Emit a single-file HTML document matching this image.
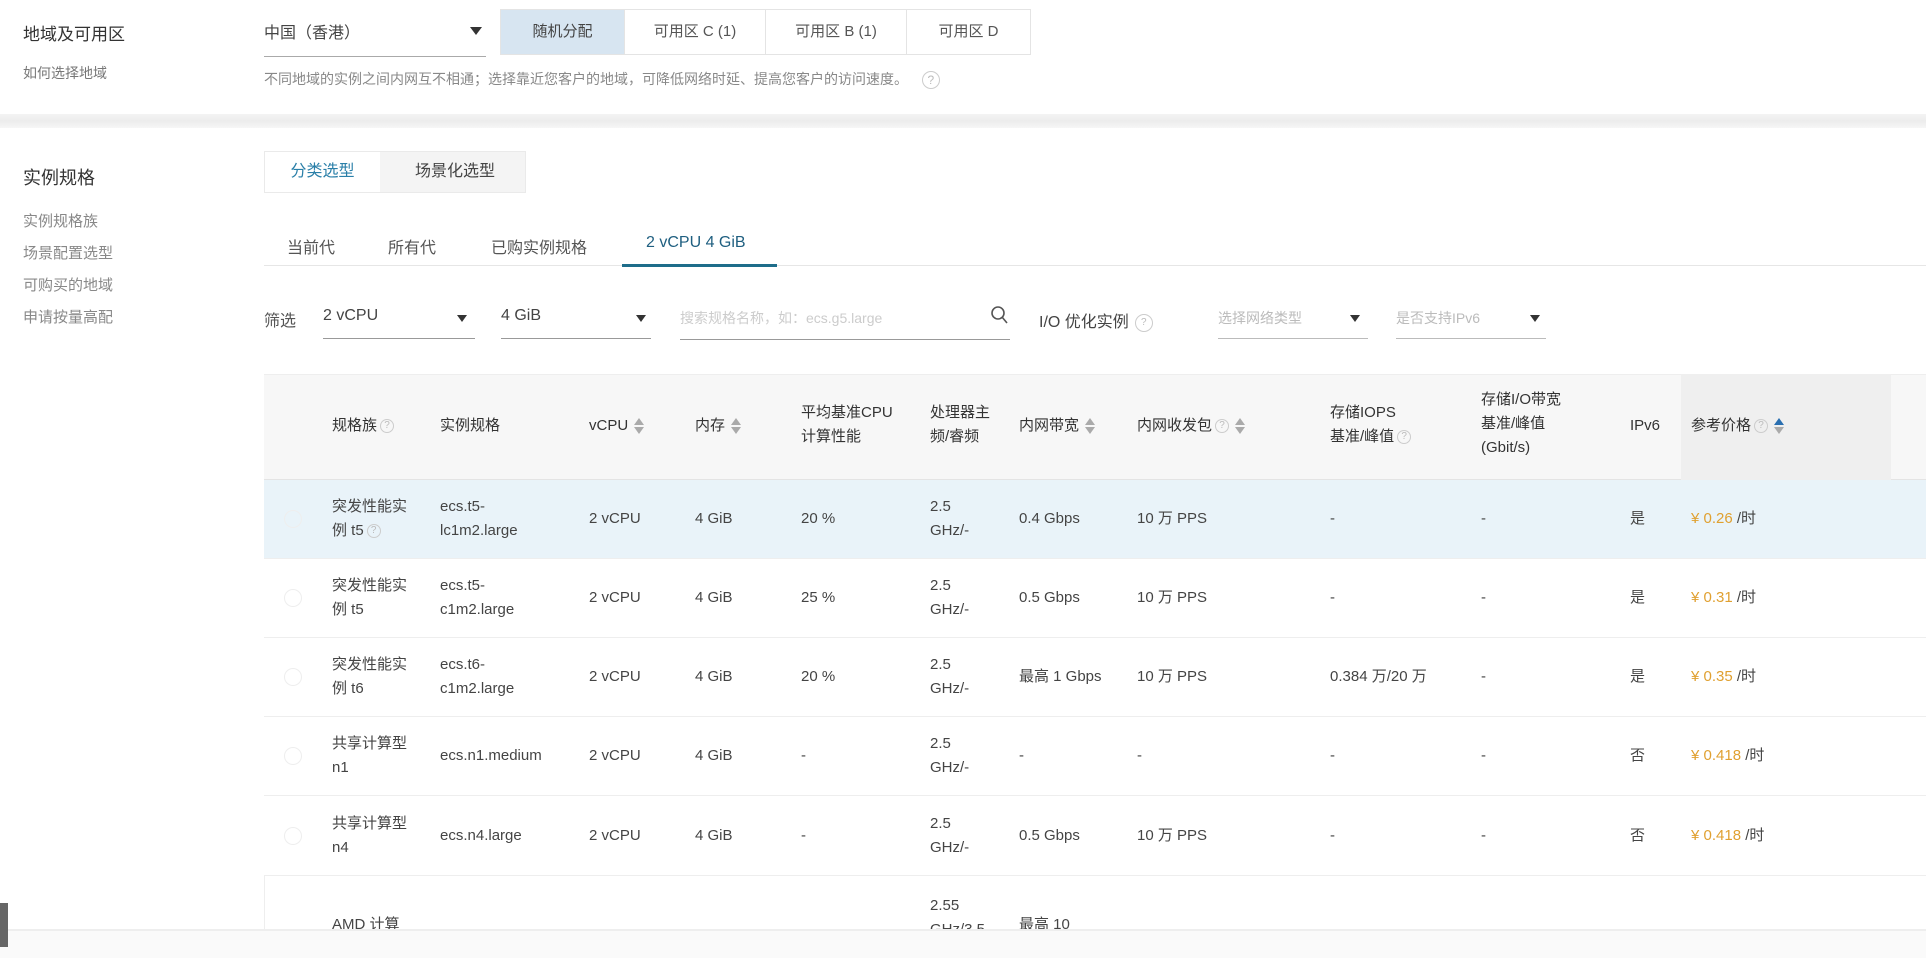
<!DOCTYPE html>
<html><head><meta charset="utf-8"><style>
*{margin:0;padding:0;box-sizing:border-box}
body{width:1926px;height:958px;overflow:hidden;background:#fff;font-family:"Liberation Sans","Noto Sans CJK SC",sans-serif;color:#444;position:relative}
.a{position:absolute;white-space:nowrap}
.g{color:#777}
.s{font-size:16px}
.tab{position:absolute;top:9px;height:46px;border:1px solid #e4e4e4;font-size:15px;line-height:44px;text-align:center;color:#555;background:#fff}
.ul{position:absolute;height:1px;background:#999}
.arr{position:absolute;width:0;height:0;border-left:6px solid transparent;border-right:6px solid transparent;border-top:8px solid #333}
.q{display:inline-block;width:14px;height:14px;border:1px solid #ccc;border-radius:50%;font-size:10px;line-height:12px;text-align:center;color:#bbb;vertical-align:middle;margin-left:3px}
.sort{display:inline-block;vertical-align:middle;margin-left:6px;width:10px;height:18px;position:relative}
.sort:before{content:"";position:absolute;top:1px;left:0;border-left:5px solid transparent;border-right:5px solid transparent;border-bottom:7px solid #aaa}
.sort:after{content:"";position:absolute;top:10px;left:0;border-left:5px solid transparent;border-right:5px solid transparent;border-top:7px solid #aaa}
.sort.up:before{border-bottom-color:#2a6fb0}
.row{position:absolute;left:264px;width:1662px;height:79px;border-bottom:1px solid #eee}
.c{position:absolute;font-size:15px;line-height:24px;color:#444;white-space:nowrap}
.rad{position:absolute;left:20px;top:30px;width:18px;height:18px;border:1px solid #eee;border-radius:50%}
.p{color:#e0a030}
</style></head><body>
<div class="a s" style="left:23px;top:20px;font-size:17px;color:#333">地域及可用区</div>
<div class="a g" style="left:23px;top:63px;font-size:14px">如何选择地域</div>
<div class="a" style="left:264px;top:19px;font-size:16px;color:#444">中国（香港）</div>
<div class="arr" style="left:470px;top:27px"></div>
<div class="ul" style="left:264px;top:56px;width:222px;background:#aaa"></div>
<div class="tab" style="left:500px;width:125px;background:#d7e5f1;color:#444">随机分配</div>
<div class="tab" style="left:624px;width:142px">可用区 C (1)</div>
<div class="tab" style="left:765px;width:142px">可用区 B (1)</div>
<div class="tab" style="left:906px;width:125px">可用区 D</div>
<div class="a g" style="left:264px;top:69px;font-size:14px;color:#888">不同地域的实例之间内网互不相通；选择靠近您客户的地域，可降低网络时延、提高您客户的访问速度。 <span class="q" style="width:18px;height:18px;line-height:16px;font-size:12px;margin-left:10px">?</span></div>
<div class="a" style="left:0;top:114px;width:1926px;height:14px;background:linear-gradient(#f4f4f4,#ececec,#f6f6f6)"></div>
<div class="a" style="left:23px;top:164px;font-size:18px;color:#333">实例规格</div>
<div class="a g" style="left:23px;top:206px;font-size:15px;line-height:32px;color:#888">实例规格族<br>场景配置选型<br>可购买的地域<br>申请按量高配</div>
<div class="a" style="left:264px;top:151px;width:262px;height:42px;border:1px solid #eaeaea;background:#f4f4f4"></div>
<div class="a" style="left:265px;top:152px;width:115px;height:40px;background:#fff;color:#2a7fa8;font-size:16px;line-height:40px;text-align:center">分类选型</div>
<div class="a" style="left:395px;top:152px;width:120px;font-size:16px;line-height:40px;text-align:center;color:#444">场景化选型</div>
<div class="a s" style="left:287px;top:234px;color:#555">当前代</div>
<div class="a s" style="left:388px;top:234px;color:#555">所有代</div>
<div class="a s" style="left:491px;top:234px;color:#555">已购实例规格</div>
<div class="a s" style="left:646px;top:234px;color:#1f5f80">2 vCPU 4 GiB</div>
<div class="a" style="left:264px;top:265px;width:1662px;height:1px;background:#e6e6e6"></div>
<div class="a" style="left:622px;top:264px;width:155px;height:3px;background:#1e6d8a"></div>
<div class="a s" style="left:264px;top:307px;color:#555">筛选</div>
<div class="a s" style="left:323px;top:307px">2 vCPU</div>
<div class="arr" style="left:457px;top:315px;border-left-width:5px;border-right-width:5px;border-top-width:7px"></div>
<div class="ul" style="left:323px;top:338px;width:152px"></div>
<div class="a s" style="left:501px;top:307px">4 GiB</div>
<div class="arr" style="left:636px;top:315px;border-left-width:5px;border-right-width:5px;border-top-width:7px"></div>
<div class="ul" style="left:501px;top:338px;width:150px"></div>
<div class="a" style="left:680px;top:308px;font-size:14px;color:#ccc">搜索规格名称，如：ecs.g5.large</div>
<svg class="a" style="left:990px;top:305px" width="18" height="20"><circle cx="8" cy="8" r="6" fill="none" stroke="#555" stroke-width="1.6"/><line x1="12" y1="12" x2="17" y2="18" stroke="#555" stroke-width="1.6"/></svg>
<div class="ul" style="left:680px;top:339px;width:330px"></div>
<div class="a s" style="left:1039px;top:308px;color:#444">I/O 优化实例<span class="q" style="width:18px;height:18px;line-height:16px;margin-left:6px">?</span></div>
<div class="a" style="left:1218px;top:308px;font-size:14px;color:#bbb">选择网络类型</div>
<div class="arr" style="left:1350px;top:315px;border-left-width:5px;border-right-width:5px;border-top-width:7px"></div>
<div class="ul" style="left:1218px;top:338px;width:150px;background:#bbb"></div>
<div class="a" style="left:1396px;top:308px;font-size:14px;color:#bbb">是否支持IPv6</div>
<div class="arr" style="left:1530px;top:315px;border-left-width:5px;border-right-width:5px;border-top-width:7px"></div>
<div class="ul" style="left:1396px;top:338px;width:150px;background:#bbb"></div>
<div class="a" style="left:264px;top:374px;width:1662px;height:106px;background:#f7f7f7;border-top:1px solid #eee;border-bottom:1px solid #e4e4e4"></div>
<div class="a" style="left:1681px;top:374px;width:210px;height:106px;background:#efefef"></div>
<div class="c" style="left:332px;top:414px;color:#333">规格族<span class="q">?</span></div>
<div class="c" style="left:440px;top:414px;color:#333">实例规格</div>
<div class="c" style="left:589px;top:414px;color:#333">vCPU<span class="sort"></span></div>
<div class="c" style="left:695px;top:414px;color:#333">内存<span class="sort"></span></div>
<div class="c" style="left:801px;top:401px;color:#333">平均基准CPU<br>计算性能</div>
<div class="c" style="left:930px;top:401px;color:#333">处理器主<br>频/睿频</div>
<div class="c" style="left:1019px;top:414px;color:#333">内网带宽<span class="sort"></span></div>
<div class="c" style="left:1137px;top:414px;color:#333">内网收发包<span class="q">?</span><span class="sort"></span></div>
<div class="c" style="left:1330px;top:401px;color:#333">存储IOPS<br>基准/峰值<span class="q">?</span></div>
<div class="c" style="left:1481px;top:388px;color:#333">存储I/O带宽<br>基准/峰值<br>(Gbit/s)</div>
<div class="c" style="left:1630px;top:414px;color:#333">IPv6</div>
<div class="c" style="left:1691px;top:414px;color:#333">参考价格<span class="q">?</span><span class="sort up"></span></div>
<div class="row" style="top:480px;background:#e9f3f9">
<div class="rad"></div>
<div class="c" style="left:68px;top:15px">突发性能实<br>例 t5<span class="q">?</span></div>
<div class="c" style="left:176px;top:15px">ecs.t5-<br>lc1m2.large</div>
<div class="c" style="left:325px;top:27px">2 vCPU</div><div class="c" style="left:431px;top:27px">4 GiB</div>
<div class="c" style="left:537px;top:27px">20 %</div><div class="c" style="left:666px;top:15px">2.5<br>GHz/-</div>
<div class="c" style="left:755px;top:27px">0.4 Gbps</div><div class="c" style="left:873px;top:27px">10 万 PPS</div>
<div class="c" style="left:1066px;top:27px">-</div><div class="c" style="left:1217px;top:27px">-</div>
<div class="c" style="left:1366px;top:27px">是</div><div class="c" style="left:1427px;top:27px"><span class="p">¥ 0.26</span> /时</div>
</div>
<div class="row" style="top:559px">
<div class="rad"></div>
<div class="c" style="left:68px;top:15px">突发性能实<br>例 t5</div>
<div class="c" style="left:176px;top:15px">ecs.t5-<br>c1m2.large</div>
<div class="c" style="left:325px;top:27px">2 vCPU</div><div class="c" style="left:431px;top:27px">4 GiB</div>
<div class="c" style="left:537px;top:27px">25 %</div><div class="c" style="left:666px;top:15px">2.5<br>GHz/-</div>
<div class="c" style="left:755px;top:27px">0.5 Gbps</div><div class="c" style="left:873px;top:27px">10 万 PPS</div>
<div class="c" style="left:1066px;top:27px">-</div><div class="c" style="left:1217px;top:27px">-</div>
<div class="c" style="left:1366px;top:27px">是</div><div class="c" style="left:1427px;top:27px"><span class="p">¥ 0.31</span> /时</div>
</div>
<div class="row" style="top:638px">
<div class="rad"></div>
<div class="c" style="left:68px;top:15px">突发性能实<br>例 t6</div>
<div class="c" style="left:176px;top:15px">ecs.t6-<br>c1m2.large</div>
<div class="c" style="left:325px;top:27px">2 vCPU</div><div class="c" style="left:431px;top:27px">4 GiB</div>
<div class="c" style="left:537px;top:27px">20 %</div><div class="c" style="left:666px;top:15px">2.5<br>GHz/-</div>
<div class="c" style="left:755px;top:27px">最高 1 Gbps</div><div class="c" style="left:873px;top:27px">10 万 PPS</div>
<div class="c" style="left:1066px;top:27px">0.384 万/20 万</div><div class="c" style="left:1217px;top:27px">-</div>
<div class="c" style="left:1366px;top:27px">是</div><div class="c" style="left:1427px;top:27px"><span class="p">¥ 0.35</span> /时</div>
</div>
<div class="row" style="top:717px">
<div class="rad"></div>
<div class="c" style="left:68px;top:15px">共享计算型<br>n1</div>
<div class="c" style="left:176px;top:27px">ecs.n1.medium</div>
<div class="c" style="left:325px;top:27px">2 vCPU</div><div class="c" style="left:431px;top:27px">4 GiB</div>
<div class="c" style="left:537px;top:27px">-</div><div class="c" style="left:666px;top:15px">2.5<br>GHz/-</div>
<div class="c" style="left:755px;top:27px">-</div><div class="c" style="left:873px;top:27px">-</div>
<div class="c" style="left:1066px;top:27px">-</div><div class="c" style="left:1217px;top:27px">-</div>
<div class="c" style="left:1366px;top:27px">否</div><div class="c" style="left:1427px;top:27px"><span class="p">¥ 0.418</span> /时</div>
</div>
<div class="row" style="top:797px">
<div class="rad"></div>
<div class="c" style="left:68px;top:15px">共享计算型<br>n4</div>
<div class="c" style="left:176px;top:27px">ecs.n4.large</div>
<div class="c" style="left:325px;top:27px">2 vCPU</div><div class="c" style="left:431px;top:27px">4 GiB</div>
<div class="c" style="left:537px;top:27px">-</div><div class="c" style="left:666px;top:15px">2.5<br>GHz/-</div>
<div class="c" style="left:755px;top:27px">0.5 Gbps</div><div class="c" style="left:873px;top:27px">10 万 PPS</div>
<div class="c" style="left:1066px;top:27px">-</div><div class="c" style="left:1217px;top:27px">-</div>
<div class="c" style="left:1366px;top:27px">否</div><div class="c" style="left:1427px;top:27px"><span class="p">¥ 0.418</span> /时</div>
</div>
<div class="a" style="left:264px;top:876px;width:1px;height:53px;background:#eee"></div>
<div class="c" style="left:930px;top:894px">2.55<br>GHz/3.5</div>
<div class="c" style="left:332px;top:913px">AMD 计算</div>
<div class="c" style="left:1019px;top:913px">最高 10</div>
<div class="a" style="left:0;top:929px;width:1926px;height:29px;background:#fafafa;border-top:2px solid #eee"></div>
<div class="a" style="left:0;top:903px;width:8px;height:44px;background:#666"></div>
</body></html>
